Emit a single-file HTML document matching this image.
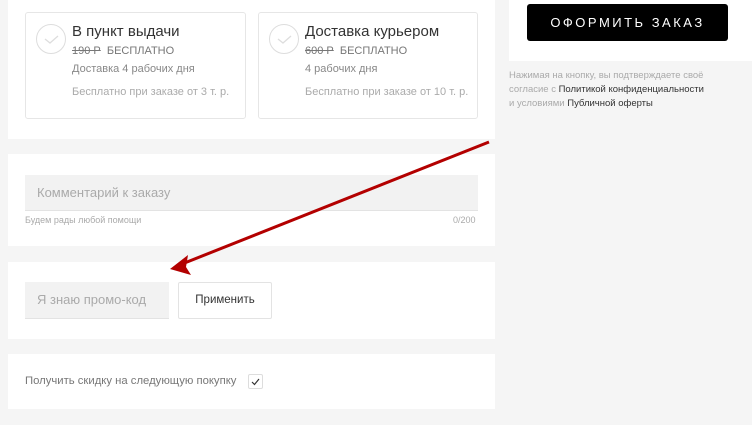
<!DOCTYPE html>
<html><head><meta charset="utf-8"><style>
*{box-sizing:border-box;margin:0;padding:0}
body{width:752px;height:425px;background:#f5f5f5;font-family:"Liberation Sans",sans-serif;position:relative;overflow:hidden;color:#333}
.p{position:absolute;background:#fff}
.card{position:absolute;top:12px;height:107px;border:1px solid #e6e6e6;border-radius:3px;background:#fff}
.circ{position:absolute;left:10px;top:11px;width:30px;height:30px;border:1px solid #ddd;border-radius:50%}
.t{position:absolute;white-space:nowrap}
</style></head><body>
<div class="p" style="left:8px;top:0;width:487px;height:139px"></div>
<div class="card" style="left:25px;width:221px">
 <div class="circ"><svg width="28" height="28"><path d="M8 14l5 4 8-7" stroke="#ddd" stroke-width="1.3" fill="none"/></svg></div>
 <div class="t" style="left:46px;top:10px;font-size:15px;color:#333">В пункт выдачи</div>
 <div class="t" style="left:46px;top:32px;font-size:11px;color:#777"><s>190 Р</s>&nbsp; БЕСПЛАТНО</div>
 <div class="t" style="left:46px;top:50px;font-size:11px;color:#888">Доставка 4 рабочих дня</div>
 <div class="t" style="left:46px;top:73px;font-size:11px;color:#aaa">Бесплатно при заказе от 3 т. р.</div>
</div>
<div class="card" style="left:258px;width:220px">
 <div class="circ"><svg width="28" height="28"><path d="M8 14l5 4 8-7" stroke="#ddd" stroke-width="1.3" fill="none"/></svg></div>
 <div class="t" style="left:46px;top:10px;font-size:15px;color:#333">Доставка курьером</div>
 <div class="t" style="left:46px;top:32px;font-size:11px;color:#777"><s>600 Р</s>&nbsp; БЕСПЛАТНО</div>
 <div class="t" style="left:46px;top:50px;font-size:11px;color:#888">4 рабочих дня</div>
 <div class="t" style="left:46px;top:73px;font-size:11px;color:#aaa">Бесплатно при заказе от 10 т. р.</div>
</div>
<div class="p" style="left:509px;top:0;width:243px;height:61px"></div>
<div class="p" style="left:527px;top:4px;width:201px;height:37px;background:#000;border-radius:3px;color:#fff;font-size:13px;letter-spacing:2.5px;text-align:center;line-height:37px">ОФОРМИТЬ ЗАКАЗ</div>
<div class="t" style="left:509px;top:69px;font-size:9.5px;line-height:14px;color:#aaa">Нажимая на кнопку, вы подтверждаете своё<br>согласие с <span style="color:#333">Политикой конфиденциальности</span><br>и условиями <span style="color:#333">Публичной оферты</span></div>
<div class="p" style="left:8px;top:154px;width:487px;height:92px"></div>
<div class="p" style="left:25px;top:175px;width:453px;height:36px;background:#f2f2f2;border-bottom:1px solid #e3e3e3"></div>
<div class="t" style="left:37px;top:185px;font-size:13px;color:#aaa">Комментарий к заказу</div>
<div class="t" style="left:25px;top:215px;font-size:9px;color:#aaa">Будем рады любой помощи</div>
<div class="t" style="left:453px;top:215px;font-size:9px;color:#aaa">0/200</div>
<div class="p" style="left:8px;top:262px;width:487px;height:77px"></div>
<div class="p" style="left:25px;top:282px;width:144px;height:37px;background:#f2f2f2;border-bottom:1px solid #e3e3e3"></div>
<div class="t" style="left:37px;top:292px;font-size:13px;color:#aaa">Я знаю промо-код</div>
<div class="p" style="left:178px;top:282px;width:94px;height:37px;border:1px solid #e3e3e3;border-radius:2px;font-size:11.5px;text-align:center;line-height:35px;color:#333">Применить</div>
<div class="p" style="left:8px;top:354px;width:487px;height:55px"></div>
<div class="t" style="left:25px;top:375px;font-size:11.3px;color:#777">Получить скидку на следующую покупку</div>
<div class="p" style="left:248px;top:374px;width:15px;height:15px;border:1px solid #ddd;border-radius:2px"><svg width="13" height="13"><path d="M3 7l2.5 2.5L10 4" stroke="#333" stroke-width="1.2" fill="none"/></svg></div>
<svg style="position:absolute;left:0;top:0" width="752" height="425"><line x1="489" y1="142" x2="182" y2="264" stroke="#b30000" stroke-width="3"/><path d="M170 269l18-14-2 12 5 8z" fill="#b30000"/></svg>
</body></html>
